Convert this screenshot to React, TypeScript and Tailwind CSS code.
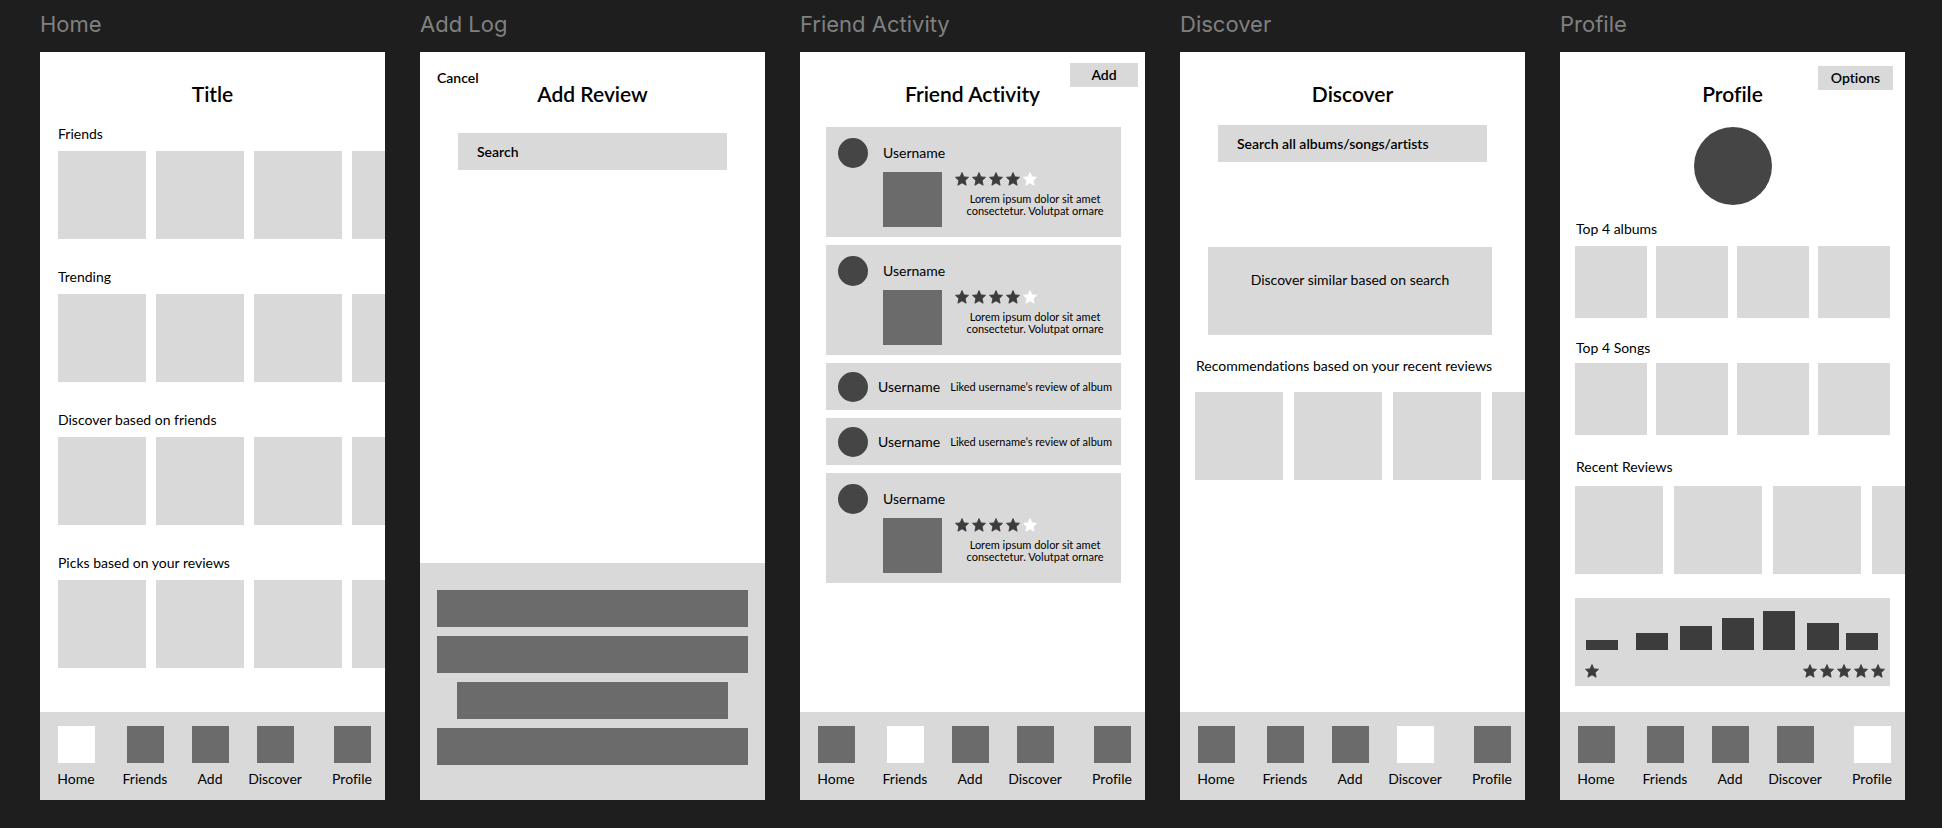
import React from 'react';
import clsx from 'clsx';

type Tab = 'Home' | 'Friends' | 'Add' | 'Discover' | 'Profile';

const tabs: Tab[] = ['Home', 'Friends', 'Add', 'Discover', 'Profile'];

const ratingCounts = [10, 17, 24, 32, 39, 27, 17];
const ratingBarX = [11, 61, 105, 147, 188, 232, 271];

interface FrameProps {
  name: string;
  children: React.ReactNode;
}

const Frame: React.FC<FrameProps> = ({ name, children }) => (
  <section className="flex min-w-0 flex-col">
    <h2 className="truncate pt-[10px] pb-[14px] font-['Inter',sans-serif] text-[22px] leading-7 text-[#808080]">
      {name}
    </h2>
    <div className="flex flex-1 flex-col overflow-hidden bg-white">
      {children}
    </div>
  </section>
);

interface HeaderProps {
  title: string;
  children?: React.ReactNode;
}

// Title and the optional action share one grid cell, so the title stays centred.
const Header: React.FC<HeaderProps> = ({ title, children }) => (
  <header className="grid *:[grid-area:1/1]">
    <h1 className="pt-7 text-center text-[21px] leading-7 font-semibold">
      {title}
    </h1>
    {children}
  </header>
);

const TabBar: React.FC<{ active: Tab }> = ({ active }) => (
  <nav className="mt-auto grid grid-cols-[50fr_88fr_42fr_88fr_66fr] bg-[#d9d9d9] pt-[14px] pb-[11px] pl-[11px]">
    {tabs.map((tab) => (
      <a
        key={tab}
        href={`#${tab.toLowerCase()}`}
        className="flex flex-col items-center gap-[6px] text-sm"
      >
        <span
          className={clsx(
            'size-[37px]',
            tab === active ? 'bg-white' : 'bg-[#6b6b6b]',
          )}
        />
        {tab}
      </a>
    ))}
  </nav>
);

const CoverRow: React.FC<{ className?: string }> = ({ className }) => (
  <div className={clsx('flex overflow-hidden', className)}>
    {[0, 1, 2, 3].map((i) => (
      <div key={i} className="size-[88px] shrink-0 bg-[#d9d9d9]" />
    ))}
  </div>
);

const TopFour: React.FC<{ className?: string }> = ({ className }) => (
  <div className={clsx('grid grid-cols-4 gap-[9px] px-[15px]', className)}>
    {[0, 1, 2, 3].map((i) => (
      <div key={i} className="aspect-square bg-[#d9d9d9]" />
    ))}
  </div>
);

const Star: React.FC<{ filled?: boolean }> = ({ filled = true }) => (
  <svg
    viewBox="0 0 14 14"
    className={clsx('size-[14px]', filled ? 'text-[#3c3c3c]' : 'text-white')}
    fill="currentColor"
    stroke="currentColor"
    strokeWidth="0.9"
    strokeLinejoin="round"
    aria-hidden="true"
  >
    <path d="M7 .6 8.9 4.9 13.5 5.3 10.1 8.5 11.1 13.2 7 10.8 2.9 13.2 3.9 8.5.5 5.3 5.1 4.9z" />
  </svg>
);

const Stars: React.FC<{ value: number; total?: number }> = ({
  value,
  total = 5,
}) => (
  <div className="flex gap-[3px]">
    {Array.from({ length: total }, (_, i) => (
      <Star key={i} filled={i < value} />
    ))}
  </div>
);

const Avatar: React.FC = () => (
  <div className="size-[30px] shrink-0 rounded-full bg-[#454545]" />
);

const ReviewCard: React.FC = () => (
  <article className="grid grid-cols-[30px_1fr] gap-x-[15px] gap-y-1 bg-[#d9d9d9] pt-[11px] pr-[6px] pb-[10px] pl-3">
    <Avatar />
    <p className="self-center text-sm">Username</p>
    <div className="col-start-2 flex gap-[13px]">
      <div className="h-[55px] w-[59px] shrink-0 bg-[#6b6b6b]" />
      <div className="flex-1">
        <Stars value={4} />
        <p className="mt-[7px] text-center text-[11px] leading-3">
          Lorem ipsum dolor sit amet
          <br />
          consectetur. Volutpat ornare
        </p>
      </div>
    </div>
  </article>
);

const LikeCard: React.FC = () => (
  <article className="flex h-[47px] items-center gap-[10px] bg-[#d9d9d9] pr-[9px] pl-3">
    <Avatar />
    <p className="text-sm">Username</p>
    <p className="ml-auto text-[11px] leading-3 whitespace-nowrap">
      Liked username’s review of album
    </p>
  </article>
);

const SearchBox: React.FC<{ placeholder: string; className?: string }> = ({
  placeholder,
  className,
}) => (
  <input
    type="search"
    aria-label={placeholder}
    placeholder={placeholder}
    className={clsx(
      'mx-[38px] h-[37px] bg-[#d9d9d9] px-[19px] text-sm font-semibold placeholder:text-black placeholder:opacity-100',
      className,
    )}
  />
);

const Home: React.FC = () => (
  <Frame name="Home">
    <Header title="Title" />
    <div className="mt-4 flex flex-col gap-7 pl-[18px]">
      {[
        'Friends',
        'Trending',
        'Discover based on friends',
        'Picks based on your reviews',
      ].map((label) => (
        <section key={label}>
          <h3 className="text-sm">{label}</h3>
          <CoverRow className="mt-[7px] gap-[10px]" />
        </section>
      ))}
    </div>
    <TabBar active="Home" />
  </Frame>
);

const AddLog: React.FC = () => (
  <Frame name="Add Log">
    <Header title="Add Review">
      <button
        type="button"
        className="mt-4 ml-[17px] self-start justify-self-start text-sm font-semibold"
      >
        Cancel
      </button>
    </Header>
    <SearchBox placeholder="Search" className="mt-[25px]" />
    <div className="mt-auto flex flex-col gap-[9px] bg-[#d9d9d9] px-[17px] pt-[27px] pb-[35px]">
      <div className="h-[37px] bg-[#6b6b6b]" />
      <div className="h-[37px] bg-[#6b6b6b]" />
      <div className="mx-5 h-[37px] bg-[#6b6b6b]" />
      <div className="h-[37px] bg-[#6b6b6b]" />
    </div>
  </Frame>
);

const FriendActivity: React.FC = () => (
  <Frame name="Friend Activity">
    <Header title="Friend Activity">
      <button
        type="button"
        className="mt-[11px] mr-[7px] h-6 w-[68px] self-start justify-self-end bg-[#d9d9d9] text-sm font-semibold"
      >
        Add
      </button>
    </Header>
    <div className="mt-[19px] mr-6 ml-[26px] flex flex-col gap-2">
      <ReviewCard />
      <ReviewCard />
      <LikeCard />
      <LikeCard />
      <ReviewCard />
    </div>
    <TabBar active="Friends" />
  </Frame>
);

const Discover: React.FC = () => (
  <Frame name="Discover">
    <Header title="Discover" />
    <SearchBox
      placeholder="Search all albums/songs/artists"
      className="mt-[17px]"
    />
    <div className="mt-[85px] mr-[33px] ml-7 h-[88px] bg-[#d9d9d9] pt-[23px] text-center text-sm">
      Discover similar based on search
    </div>
    <h3 className="mt-[21px] pl-4 text-sm">
      Recommendations based on your recent reviews
    </h3>
    <CoverRow className="mt-4 gap-[11px] pl-[15px]" />
    <TabBar active="Discover" />
  </Frame>
);

const RatingChart: React.FC = () => (
  <div className="mx-[15px] mt-6 bg-[#d9d9d9] pt-[13px] pb-2">
    <svg
      viewBox="0 0 315 39"
      className="w-full"
      fill="#3c3c3c"
      role="img"
      aria-label="Ratings"
    >
      {ratingCounts.map((count, i) => (
        <rect
          key={i}
          x={ratingBarX[i]}
          y={39 - count}
          width={32}
          height={count}
        />
      ))}
    </svg>
    <div className="mt-[14px] flex justify-between pr-[5px] pl-[10px]">
      <Stars value={1} total={1} />
      <Stars value={5} />
    </div>
  </div>
);

const Profile: React.FC = () => (
  <Frame name="Profile">
    <Header title="Profile">
      <button
        type="button"
        className="mt-[14px] mr-3 h-6 w-[75px] self-start justify-self-end bg-[#d9d9d9] text-sm font-semibold"
      >
        Options
      </button>
    </Header>
    <div className="mx-auto mt-[19px] size-[78px] rounded-full bg-[#454545]" />
    <h3 className="mt-[14px] pl-4 text-sm">Top 4 albums</h3>
    <TopFour className="mt-[7px]" />
    <h3 className="mt-5 pl-4 text-sm">Top 4 Songs</h3>
    <TopFour className="mt-[5px]" />
    <h3 className="mt-[22px] pl-4 text-sm">Recent Reviews</h3>
    <CoverRow className="mt-[9px] gap-[11px] pl-[15px]" />
    <RatingChart />
    <TabBar active="Profile" />
  </Frame>
);

const App: React.FC = () => {
  return (
    <main className="grid min-h-screen grid-cols-5 gap-[35px] bg-[#1e1e1e] pr-[37px] pb-7 pl-10 font-['Lato',sans-serif] text-black [font-variant-ligatures:none]">
      <Home />
      <AddLog />
      <FriendActivity />
      <Discover />
      <Profile />
    </main>
  );
};

export default App;
